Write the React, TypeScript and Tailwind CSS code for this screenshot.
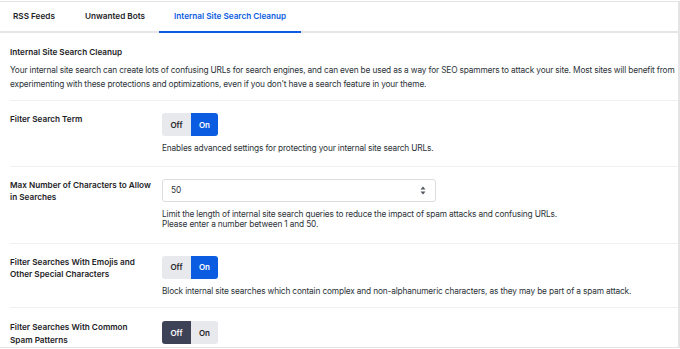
import { ReactElement } from "react";

type ToggleProps = { on: boolean };
const Toggle = ({ on }: ToggleProps): ReactElement => {
  return (
    <div className="flex h-[23px] w-[56px] overflow-hidden rounded-[3px] text-[8px] font-semibold">
      <div className={on ? "flex w-[29px] items-center justify-center bg-[#e8e9ed] text-[#1d2327]" : "flex w-[29px] items-center justify-center bg-[#3d4256] text-white"}>Off</div>
      <div className={on ? "flex w-[27px] items-center justify-center bg-[#0b5ce1] text-white" : "flex w-[27px] items-center justify-center bg-[#e8e9ed] text-[#1d2327]"}>On</div>
    </div>
  );
};

type RowProps = {
  label: string[],
  children: ReactElement | ReactElement[],
  pad: string,
};
const Row = ({ label, children, pad }: RowProps): ReactElement => {
  return (
    <div className={"flex " + pad}>
      <div className="w-[152px] shrink-0 text-[8.2px] font-semibold leading-[12.5px] text-[#1d2327]">
        {label.map((l, i) => <div key={i}>{l}</div>)}
      </div>
      <div className="flex flex-col">{children}</div>
    </div>
  );
};

const Help = ({ lines }: { lines: string[] }): ReactElement => (
  <div className="mt-[7px] text-[8.3px] leading-[10.5px] tracking-[-0.15px] text-[#2c3338]">
    {lines.map((l, i) => <div key={i}>{l}</div>)}
  </div>
);

export default function App(): ReactElement {
  return (
    <div className="h-[349px] w-[680px] overflow-hidden bg-white font-['Inter',sans-serif]">
      <div className="mt-[1px] h-[347px] border-t border-r-2 border-b border-[#e4e4e6]">
        <nav className="flex h-[31px] border-b-2 border-[#e6e6e8] text-[8.2px] font-semibold text-[#1d2327]">
          <div className="flex items-center pl-[13px] pr-[15px]">RSS Feeds</div>
          <div className="flex items-center pl-[15px] pr-[14px]">Unwanted Bots</div>
          <div className="relative flex items-center px-[15px] text-[#0b5ce1]">
            Internal Site Search Cleanup
            <span className="absolute right-0 bottom-[-2px] left-0 h-[2px] bg-[#0b5ce1]" />
          </div>
        </nav>
        <div className="pl-[10px]">
          <div className="border-b border-[#f0f0f1] pt-[13px] pb-[9px]">
            <h2 className="text-[8.2px] font-semibold leading-[12px] text-[#1d2327]">Internal Site Search Cleanup</h2>
            <p className="mt-[6px] text-[8.3px] leading-[13.5px] tracking-[-0.15px] text-[#2c3338]">
              Your internal site search can create lots of confusing URLs for search engines, and can even be used as a way for SEO spammers to attack your site. Most sites will benefit from experimenting with these protections and optimizations, even if you don't have a search feature in your theme.
            </p>
          </div>
          <Row label={["Filter Search Term"]} pad="border-b border-[#f0f0f1] pt-[12px] pb-[12px]">
            <Toggle on={true} />
            <Help lines={["Enables advanced settings for protecting your internal site search URLs."]} />
          </Row>
          <Row label={["Max Number of Characters to Allow", "in Searches"]} pad="border-b border-[#f0f0f1] pt-[12px] pb-[13px]">
            <div className="flex h-[23px] w-[274px] items-center justify-between rounded-[3px] border border-[#dcdde1] pl-[8px] pr-[9px] text-[8.3px] text-[#2c3338]">
              <span>50</span>
              <svg width="6" height="9" viewBox="0 0 6 9">
                <path d="M3 0.5 L5.5 3.5 H0.5 Z" fill="#50575e" />
                <path d="M3 8.5 L5.5 5.5 H0.5 Z" fill="#50575e" />
              </svg>
            </div>
            <Help lines={["Limit the length of internal site search queries to reduce the impact of spam attacks and confusing URLs.", "Please enter a number between 1 and 50."]} />
          </Row>
          <Row label={["Filter Searches With Emojis and", "Other Special Characters"]} pad="border-b border-[#f0f0f1] pt-[12px] pb-[11px]">
            <Toggle on={true} />
            <Help lines={["Block internal site searches which contain complex and non-alphanumeric characters, as they may be part of a spam attack."]} />
          </Row>
          <Row label={["Filter Searches With Common", "Spam Patterns"]} pad="pt-[13px] pb-[8px]">
            <Toggle on={false} />
          </Row>
        </div>
      </div>
    </div>
  );
}
